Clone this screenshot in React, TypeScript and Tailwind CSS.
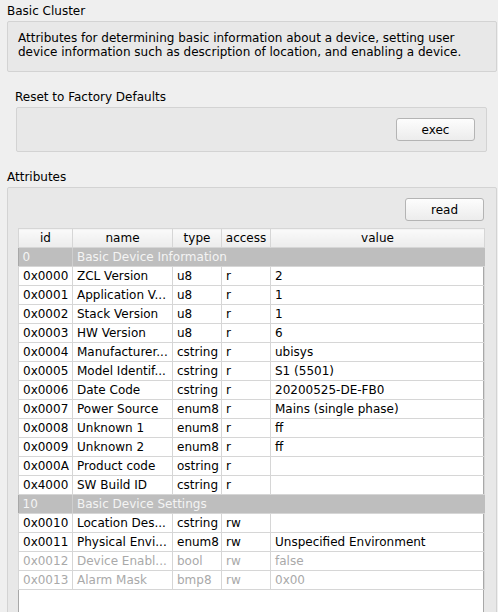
import React from "react";

type Row =
  | { group: true; id: string; label: string }
  | { group?: false; id: string; name: string; type: string; access: string; value: string; disabled?: boolean };

const rows: Row[] = [
  { group: true, id: "0", label: "Basic Device Information" },
  { id: "0x0000", name: "ZCL Version", type: "u8", access: "r", value: "2" },
  { id: "0x0001", name: "Application V...", type: "u8", access: "r", value: "1" },
  { id: "0x0002", name: "Stack Version", type: "u8", access: "r", value: "1" },
  { id: "0x0003", name: "HW Version", type: "u8", access: "r", value: "6" },
  { id: "0x0004", name: "Manufacturer...", type: "cstring", access: "r", value: "ubisys" },
  { id: "0x0005", name: "Model Identif...", type: "cstring", access: "r", value: "S1 (5501)" },
  { id: "0x0006", name: "Date Code", type: "cstring", access: "r", value: "20200525-DE-FB0" },
  { id: "0x0007", name: "Power Source", type: "enum8", access: "r", value: "Mains (single phase)" },
  { id: "0x0008", name: "Unknown 1", type: "enum8", access: "r", value: "ff" },
  { id: "0x0009", name: "Unknown 2", type: "enum8", access: "r", value: "ff" },
  { id: "0x000A", name: "Product code", type: "ostring", access: "r", value: "" },
  { id: "0x4000", name: "SW Build ID", type: "cstring", access: "r", value: "" },
  { group: true, id: "10", label: "Basic Device Settings" },
  { id: "0x0010", name: "Location Des...", type: "cstring", access: "rw", value: "" },
  { id: "0x0011", name: "Physical Envi...", type: "enum8", access: "rw", value: "Unspecified Environment" },
  { id: "0x0012", name: "Device Enabl...", type: "bool", access: "rw", value: "false", disabled: true },
  { id: "0x0013", name: "Alarm Mask", type: "bmp8", access: "rw", value: "0x00", disabled: true },
];

const cell = "h-[19px] border border-[#d6d6d6] px-[4px] text-left font-normal whitespace-nowrap overflow-hidden leading-[18px]";
const head = "h-[19px] border border-[#d6d6d6] bg-gradient-to-b from-[#fafafa] to-[#ececec] font-normal text-center leading-[18px]";

const QtButton = ({ label }: { label: string }) => (
  <button className="w-[79px] h-[23px] rounded-[3px] border border-[#b4b4b4] bg-gradient-to-b from-[#fdfdfd] to-[#ececec] text-[12px] text-black leading-none">
    {label}
  </button>
);

const App = () => {
  return (
    <div
      className="w-[498px] h-[612px] overflow-hidden bg-[#efefef] text-[12px] text-black"
      style={{ fontFamily: '"DejaVu Sans", "Liberation Sans", sans-serif' }}
    >
      <div className="pl-[7px] pt-[3px] h-[21px] leading-[16px]">Basic Cluster</div>
      <div className="ml-[7px] mr-[1px] h-[51px] border border-[#d3d3d3] rounded-[2px] bg-[#e8e8e8] pl-[10px] pt-[9px] leading-[14px]">
        Attributes for determining basic information about a device, setting user
        <br />
        device information such as description of location, and enabling a device.
      </div>

      <div className="pl-[15px] pt-[17px] h-[35px] leading-[16px]">Reset to Factory Defaults</div>
      <div className="ml-[16px] mr-[11px] h-[45px] border border-[#d3d3d3] rounded-[2px] bg-[#e8e8e8] flex justify-end items-start pt-[10px] pr-[11px]">
        <QtButton label="exec" />
      </div>

      <div className="pl-[7px] pt-[17px] h-[35px] leading-[16px]">Attributes</div>
      <div className="ml-[7px] mr-[1px] h-[440px] border border-[#d3d3d3] rounded-[2px] bg-[#e8e8e8] pt-[10px] pl-[10px] pr-[12px]">
        <div className="flex justify-end">
          <QtButton label="read" />
        </div>
        <div className="mt-[7px] h-[400px] bg-white border border-[#a8a8a8]">
          <table className="border-collapse table-fixed w-[466px] -mt-px -ml-px">
            <colgroup>
              <col className="w-[54px]" />
              <col className="w-[100px]" />
              <col className="w-[49px]" />
              <col className="w-[49px]" />
              <col className="w-[214px]" />
            </colgroup>
            <thead>
              <tr>
                <th className={head}>id</th>
                <th className={head}>name</th>
                <th className={head}>type</th>
                <th className={head}>access</th>
                <th className={head}>value</th>
              </tr>
            </thead>
            <tbody>
              {rows.map((r) =>
                r.group ? (
                  <tr key={r.id} className="bg-[#bebebe] text-[#f4f4f4]">
                    <td className="h-[19px] border-y border-[#d6d6d6] border-r border-r-[#cfcfcf] px-[4px] leading-[18px]">{r.id}</td>
                    <td colSpan={4} className="h-[19px] border-y border-[#d6d6d6] px-[4px] leading-[18px] whitespace-nowrap">
                      {r.label}
                    </td>
                  </tr>
                ) : (
                  <tr key={r.id} className={r.disabled ? "text-[#a9a9a9]" : "text-black"}>
                    <td className={cell}>{r.id}</td>
                    <td className={cell}>{r.name}</td>
                    <td className={cell}>{r.type}</td>
                    <td className={cell}>{r.access}</td>
                    <td className={cell}>{r.value}</td>
                  </tr>
                )
              )}
            </tbody>
          </table>
        </div>
      </div>
    </div>
  );
};

export default App;
